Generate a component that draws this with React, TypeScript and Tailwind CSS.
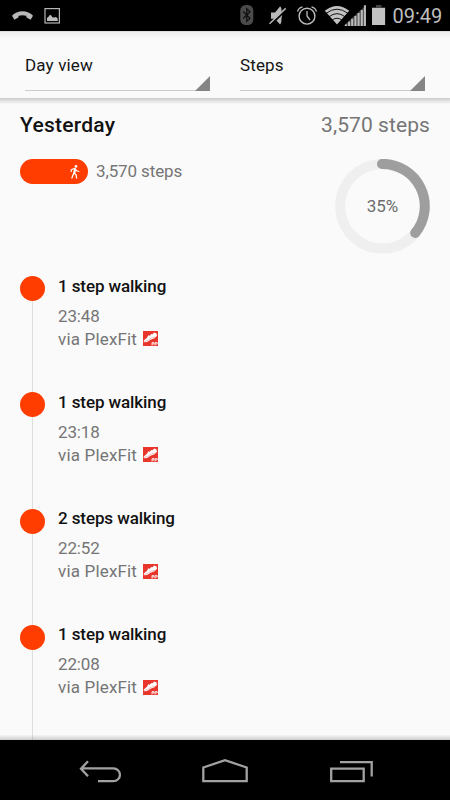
import React from "react";

const events = [
  { title: "1 step walking", time: "23:48" },
  { title: "1 step walking", time: "23:18" },
  { title: "2 steps walking", time: "22:52" },
  { title: "1 step walking", time: "22:08" },
];

function StatusBar() {
  return (
    <div className="flex h-[31px] shrink-0 items-center bg-black">
      <svg className="h-[31px] w-[232px] shrink-0" viewBox="0 0 232 31" fill="none">
        <path d="M12 15.8C17 9.6 28 9.6 33 15.8L30.6 19.8L26.6 17.6L26.2 15.7Q22.3 14.8 18.7 15.7L18.3 17.6L14.4 19.8Z" fill="#b9b9b9" />
        <rect x="45" y="8.6" width="14.4" height="14.4" stroke="#b5b5b5" strokeWidth="1.2" />
        <path d="M47 21V18L48.5 16.8L50 14.8L51 15.2L52.5 17.2L54 17.6L56 16.9L57.7 18.5V21Z" fill="#bbb" />
      </svg>
      <svg className="h-[31px] w-[158px] shrink-0" viewBox="232 0 158 31" fill="none">
        <rect x="240.3" y="5" width="13" height="20" rx="5.5" fill="#4b4b4b" />
        <path d="M243.2 11.5L250 18.3L246.8 21.3V8.7L250 11.7L243.2 18.5" stroke="#111" strokeWidth="1.3" />
        <path d="M271 12.5H275L280 6.5Q281.8 7 281.5 12Q283 15 281.5 18Q281.7 23 280 24.5L275 18.7H271Z" fill="#b8b8b8" />
        <path d="M270.5 25L286.6 9.4" stroke="#000" strokeWidth="2" />
        <path d="M269.5 23.8L285.7 8.4" stroke="#b8b8b8" strokeWidth="1.5" />
        <circle cx="307" cy="16.2" r="7.9" stroke="#bcbcbc" strokeWidth="1.4" />
        <path d="M307 11V16L310 20M297.6 11.7Q298.2 8 302.5 6.9M311.5 6.9Q315.8 8 316.4 11.7" stroke="#bcbcbc" strokeWidth="1.3" />
        <path d="M324.8 10.8Q337 1.2 349.2 10.8L337 24.5Z" fill="#c2c2c2" />
        <path d="M326.3 13.2Q337 5.2 347.7 13.2M329.2 16.6Q337 10.7 344.8 16.6M332.3 19.9Q337 16.6 341.7 19.9" stroke="#000" strokeWidth="0.9" />
        <path d="M343.5 26L366 5.2V26Z" fill="#4c4c4c" />
        <path d="M345 24.6h2V26h-2zM348.1 21.7h2V26h-2zM351.2 18.8h2V26h-2zM354.4 15.9h2V26h-2zM357.6 12.9h2V26h-2zM360.8 9.9h2V26h-2zM363.9 5.3h2V26h-2z" fill="#bcbcbc" />
        <path d="M376 5h5.5v2.2h3.6v3H372V7.2h4z" fill="#444" />
        <rect x="372" y="8" width="13.1" height="17" fill="#c2c2c2" />
      </svg>
      <span className="ml-[2.5px] pt-[2px] text-[20px] leading-[29px] text-[#bebebe]">09:49</span>
    </div>
  );
}

function Spinner({ label }: { label: string }) {
  return (
    <div className="flex h-[40px] w-[185px] items-end justify-between border-b border-[#cbcbcb]">
      <span className="h-[36px] text-[17px] leading-[22px] tracking-[0.15px] text-[#151515]">{label}</span>
      <svg className="-mb-px h-[15px] w-[15px]" viewBox="0 0 15 15">
        <path d="M15 0V15H0Z" fill="#858585" />
      </svg>
    </div>
  );
}

function Walker() {
  return (
    <svg className="h-[14px] w-[10px]" viewBox="0 0 10 14" fill="none" stroke="#fff" strokeLinecap="round" strokeLinejoin="round">
      <circle cx="6" cy="1.4" r="1.35" fill="#fff" stroke="none" />
      <path d="M1.2 6.6V4.7L4.8 3.4L6.5 5.7L8.8 6.5" strokeWidth="1.2" />
      <path d="M4.8 3.7L3.9 8.1L6.1 9.8L6.6 13M3.6 8.4L1.9 13" strokeWidth="1.3" />
      <path d="M4.3 3.6L6.2 4.2L5.3 8.4L3.4 8.2Z" fill="#fff" stroke="none" />
    </svg>
  );
}

function PlexFitLogo() {
  return (
    <svg className="ml-[6px] h-[15px] w-[15px]" viewBox="0 0 15 15">
      <rect width="15" height="15" fill="#e9362d" />
      <path d="M0.8 11.3L0.8 9.4L4.2 6.6L5.2 4.3L6.8 4.8L8.3 3.1L9.5 3.3L11.2 1.5L13.6 2.4L14 4.8L11.5 7.2L8 8.4L4 10.9Z" fill="#fff" />
      <path d="M1 10.5L4.5 9.4L8.2 7.1L12 6" fill="none" stroke="#df8d86" strokeWidth="0.5" />
      <path d="M9 14.5V11.6H11V13H9M12 14.5V11.6H14.2V13H12" fill="none" stroke="#fff" strokeWidth="0.8" />
    </svg>
  );
}

export default function App() {
  return (
    <div className="flex h-[800px] w-[450px] flex-col overflow-hidden bg-[#fafafa] font-['Roboto',sans-serif]">
      <StatusBar />
      <header className="z-10 flex h-[67px] shrink-0 gap-[30px] border-t border-[#dedede] bg-[#fafafa] bg-linear-to-b from-[#eeeeee] to-[#fafafa] to-10% px-[25px] pt-[19px]">
        <Spinner label="Day view" />
        <Spinner label="Steps" />
      </header>
      <div className="h-[6px] shrink-0 bg-linear-to-b from-[#cccccc] to-[#fafafa]" />
      <main className="flex h-[636px] shrink-0 flex-col overflow-hidden">
        <div className="flex h-[55px] shrink-0 justify-between px-[20px] pt-[8px] leading-[26px]">
          <h1 className="text-[21px] font-medium tracking-[0.25px] text-[#111]">Yesterday</h1>
          <span className="text-[21px] tracking-[0.08px] text-[#757575]">3,570 steps</span>
        </div>
        <section className="flex h-[117px] shrink-0 justify-between px-[20px]">
          <div className="flex h-[25px] items-center gap-[8px]">
            <div className="flex h-[25px] w-[68px] items-center justify-end rounded-full bg-[#ff3d00] pr-[8px]">
              <Walker />
            </div>
            <span className="text-[17px] leading-[25px] tracking-[-0.12px] text-[#757575]">3,570 steps</span>
          </div>
          <div className="grid h-[95px] w-[95px] place-items-center">
            <svg className="col-start-1 row-start-1 h-[95px] w-[95px]" viewBox="0 0 95 95" fill="none">
              <circle cx="47.5" cy="47.2" r="42.3" stroke="#efefef" strokeWidth="10" />
              <path d="M47 4.9A42.3 42.3 0 0 1 80.2 74" stroke="#9e9e9e" strokeWidth="10" strokeLinecap="round" />
            </svg>
            <span className="col-start-1 row-start-1 text-[17px] text-[#6c6c6c]">35%</span>
          </div>
        </section>
        <ol className="shrink-0">
          {events.map((event) => (
            <li key={event.time} className="flex h-[116.25px] pl-[20px]">
              <div className="flex w-[25px] flex-col items-center">
                <div className="h-[25px] w-[25px] shrink-0 rounded-full bg-[#ff3d00]" />
                <div className="w-px grow bg-[#dedede]" />
              </div>
              <div className="-mt-[0.4px] ml-[13px]">
                <h2 className="h-[27px] text-[17px] leading-[20px] font-medium tracking-[-0.1px] text-[#111]">{event.title}</h2>
                <p className="h-[24px] text-[17px] leading-[26px] tracking-[-0.15px] text-[#757575]">{event.time}</p>
                <p className="flex items-center text-[17px] leading-[24px] tracking-[0.17px] text-[#757575]">
                  via PlexFit
                  <PlexFitLogo />
                </p>
              </div>
            </li>
          ))}
        </ol>
      </main>
      <div className="z-10 -mt-[5px] h-[5px] shrink-0 bg-linear-to-b from-black/2 to-black/18" />
      <nav className="h-[60px] shrink-0 bg-black">
        <svg className="h-[60px] w-[450px]" viewBox="0 740 450 60" fill="none" stroke="#a2a2a2" strokeWidth="2.3">
          <path d="M81 768.3H113.5A6.4 6.4 0 0 1 113.5 781.2H98M88 761.2L81 768.8L88 776.3" />
          <path d="M203.3 781.2V767.5L225 760.2L246.7 767.5V781.2Z" />
          <path d="M331.2 768.7H363.7V781.2H331.2ZM340 762.2H371.7V776.5" />
        </svg>
      </nav>
    </div>
  );
}
